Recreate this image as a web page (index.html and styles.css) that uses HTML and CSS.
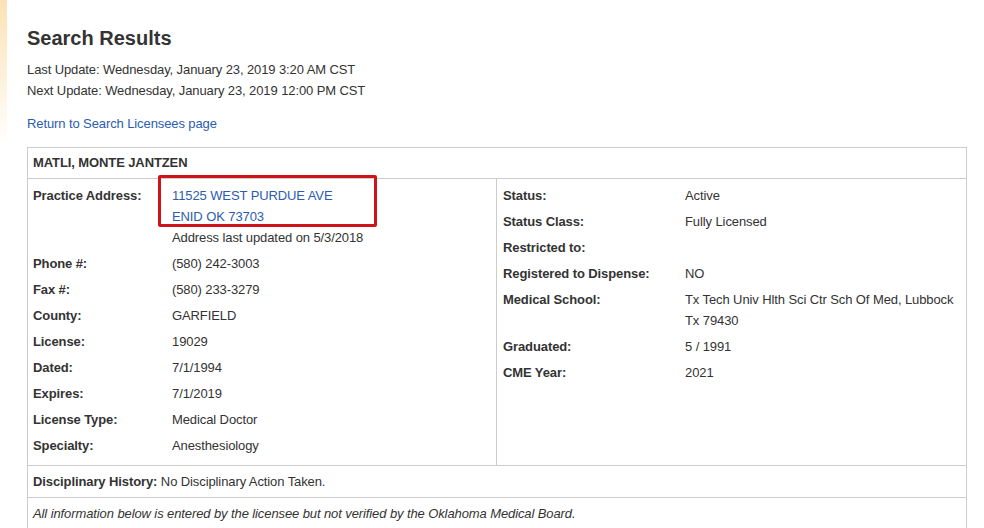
FILE: index.html
```html
<!DOCTYPE html>
<html lang="en">
<head>
<meta charset="utf-8">
<title>Search Results</title>
<link rel="stylesheet" href="styles.css">
</head>
<body>
<main class="page">
  <h1 class="title">Search Results</h1>
  <div class="updates">
    <p>Last Update: Wednesday, January 23, 2019 3:20 AM CST</p>
    <p>Next Update: Wednesday, January 23, 2019 12:00 PM CST</p>
  </div>
  <p class="return"><a href="#">Return to Search Licensees page</a></p>

  <section class="record">
    <div class="record-head">MATLI, MONTE JANTZEN</div>
    <div class="record-body">
      <dl class="col col-left">
        <dt>Practice Address:</dt>
        <dd class="address">
          <a href="#">11525 WEST PURDUE AVE</a><br>
          <a href="#">ENID OK 73703</a><br>
          Address last updated on 5/3/2018
          <span class="highlight"></span>
        </dd>
        <dt>Phone #:</dt><dd>(580) 242-3003</dd>
        <dt>Fax #:</dt><dd>(580) 233-3279</dd>
        <dt>County:</dt><dd>GARFIELD</dd>
        <dt>License:</dt><dd>19029</dd>
        <dt>Dated:</dt><dd>7/1/1994</dd>
        <dt>Expires:</dt><dd>7/1/2019</dd>
        <dt>License Type:</dt><dd>Medical Doctor</dd>
        <dt>Specialty:</dt><dd>Anesthesiology</dd>
      </dl>
      <dl class="col col-right">
        <dt>Status:</dt><dd>Active</dd>
        <dt>Status Class:</dt><dd>Fully Licensed</dd>
        <dt>Restricted to:</dt><dd></dd>
        <dt>Registered to Dispense:</dt><dd>NO</dd>
        <dt>Medical School:</dt><dd>Tx Tech Univ Hlth Sci Ctr Sch Of Med, Lubbock Tx 79430</dd>
        <dt>Graduated:</dt><dd>5 / 1991</dd>
        <dt>CME Year:</dt><dd>2021</dd>
      </dl>
    </div>
    <div class="record-row"><strong>Disciplinary History:</strong> No Disciplinary Action Taken.</div>
    <div class="record-row note">All information below is entered by the licensee but not verified by the Oklahoma Medical Board.</div>
  </section>
</main>
</body>
</html>
```

FILE: styles.css
```css
html, body {
  margin: 0;
  padding: 0;
}

body {
  font-family: "Liberation Sans", Arial, sans-serif;
  font-size: 13px;
  line-height: 21px;
  letter-spacing: -0.1px;
  color: #333333;
  background-color: #ffffff;
  background-image: linear-gradient(to bottom, #fbe2b4 0%, #fdefd6 45%, #ffffff 100%);
  background-size: 7px 145px;
  background-repeat: no-repeat;
}

a {
  color: #2b5cb0;
  text-decoration: none;
}

.page {
  padding: 27px 0 0 27px;
  width: 940px;
}

.title {
  margin: 0 0 10px;
  font-size: 20px;
  line-height: 21px;
  padding-top: 1px;
  font-weight: bold;
  letter-spacing: 0;
  color: #333333;
}

.updates p {
  margin: 0;
}

.return {
  margin: 12px 0 0;
}

.record {
  margin-top: 13px;
  border: 1px solid #cccccc;
  border-bottom: none;
  width: 940px;
  box-sizing: border-box;
}

.record-head {
  padding: 4px 5px 5px;
  font-weight: bold;
  border-bottom: 1px solid #cccccc;
}

.record-body {
  display: grid;
  grid-template-columns: 469px 1fr;
}

.col {
  margin: 0;
  display: grid;
  align-content: start;
}

.col dt,
.col dd {
  margin: 0;
  padding: 2px 0 3px;
}

.col dt {
  font-weight: bold;
}

.col-left {
  grid-template-columns: 139px 1fr;
  padding: 4px 0 6px 5px;
  border-right: 1px solid #cccccc;
}

.col-right {
  grid-template-columns: 182px 1fr;
  padding: 4px 2px 6px 6px;
}

.address {
  position: relative;
}

.highlight {
  position: absolute;
  left: -14px;
  top: -8px;
  width: 219px;
  height: 52px;
  box-sizing: border-box;
  border: 3px solid #d0121b;
  border-radius: 2px;
  pointer-events: none;
}

.record-row {
  border-top: 1px solid #cccccc;
  padding: 5px 5px;
}

.record-row strong {
  font-weight: bold;
}

.note {
  font-style: italic;
}
```
